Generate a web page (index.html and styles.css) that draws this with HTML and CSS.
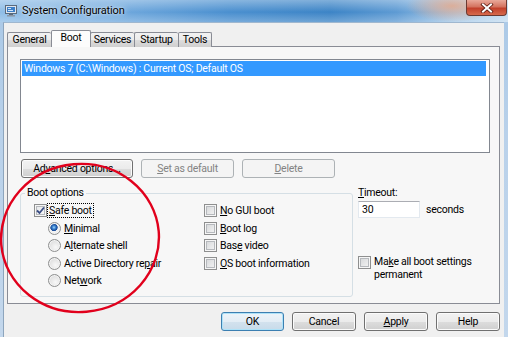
FILE: index.html
```html
<!DOCTYPE html>
<html lang="en">
<head>
    <meta charset="UTF-8">
    <title>System Configuration</title>
    <link rel="stylesheet" href="styles.css">
</head>
<body>
    <div class="window">
        <div class="titlebar">
            <svg class="app-icon" width="12" height="12" viewBox="0 0 12 12">
                <rect x="0.5" y="0.5" width="11" height="8" fill="#dfe6ee" stroke="#5a6a7c"/>
                <rect x="2" y="2" width="8" height="5" fill="#3d7fc7"/>
                <rect x="3" y="3" width="3" height="1" fill="#cfe3f6"/>
                <rect x="3" y="5" width="5" height="1" fill="#cfe3f6"/>
                <rect x="4" y="9" width="4" height="1" fill="#5a6a7c"/>
                <rect x="2" y="10" width="8" height="1.5" fill="#8a96a4"/>
            </svg>
            <span class="title">System Configuration</span>
            <div class="close-btn">
                <svg width="14" height="10" viewBox="0 0 14 10">
                    <path d="M3 1.5 L11 8.5 M11 1.5 L3 8.5" stroke="#5a1a10" stroke-width="3.6" stroke-linecap="square"/>
                    <path d="M3 1.5 L11 8.5 M11 1.5 L3 8.5" stroke="#fff" stroke-width="2" stroke-linecap="square"/>
                </svg>
            </div>
        </div>

        <div class="client">
            <div class="tabs">
                <div class="tab tab-general">General</div>
                <div class="tab tab-boot selected">Boot</div>
                <div class="tab tab-services">Services</div>
                <div class="tab tab-startup">Startup</div>
                <div class="tab tab-tools">Tools</div>
            </div>

            <div class="panel">
                <div class="listbox">
                    <div class="list-item selected">Windows 7 (C:\Windows) : Current OS; Default OS</div>
                </div>

                <div class="list-buttons">
                    <button class="btn btn-advanced">Ad<u>v</u>anced options...</button>
                    <button class="btn btn-wide" disabled><u>S</u>et as default</button>
                    <button class="btn btn-wide" disabled><u>D</u>elete</button>
                </div>

                <div class="options">
                    <fieldset class="group">
                        <legend>Boot options</legend>
                        <div class="group-grid">
                            <div class="col">
                                <label class="opt">
                                    <span class="check checked">
                                        <svg width="9" height="9" viewBox="0 0 9 9">
                                            <path d="M1 4.5 L3.5 7 L8 1.5" fill="none" stroke="#3a4d84" stroke-width="1.8"/>
                                        </svg>
                                    </span>
                                    <span class="focus"><u>S</u>afe boot</span>
                                </label>
                                <label class="opt sub"><span class="radio on"></span><u>M</u>inimal</label>
                                <label class="opt sub"><span class="radio"></span>A<u>l</u>ternate shell</label>
                                <label class="opt sub"><span class="radio"></span>Active Directory re<u>p</u>air</label>
                                <label class="opt sub"><span class="radio"></span>Net<u>w</u>ork</label>
                            </div>
                            <div class="col">
                                <label class="opt"><span class="check"></span><span class="txt"><u>N</u>o GUI boot</span></label>
                                <label class="opt"><span class="check"></span><span class="txt"><u>B</u>oot log</span></label>
                                <label class="opt"><span class="check"></span><span class="txt">Bas<u>e</u> video</span></label>
                                <label class="opt"><span class="check"></span><span class="txt"><u>O</u>S boot information</span></label>
                            </div>
                        </div>
                    </fieldset>

                    <div class="timeout">
                        <div class="timeout-label"><u>T</u>imeout:</div>
                        <div class="timeout-row">
                            <div class="textbox">30</div>
                            <span class="unit">seconds</span>
                        </div>
                        <label class="permanent">
                            <span class="check"></span>
                            <span class="txt">Ma<u>k</u>e all boot settings<br>permanent</span>
                        </label>
                    </div>
                </div>
            </div>

            <div class="footer">
                <button class="btn btn-default btn-ok">OK</button>
                <button class="btn btn-foot">Cancel</button>
                <button class="btn btn-foot"><u>A</u>pply</button>
                <button class="btn btn-foot">Help</button>
            </div>
        </div>

        <svg class="annotation" width="508" height="337" viewBox="0 0 508 337">
            <ellipse cx="80" cy="238" rx="79" ry="74" fill="none" stroke="#e1001c" stroke-width="2.4" transform="rotate(-5 80 238)"/>
        </svg>
    </div>
</body>
</html>
```

FILE: styles.css
```css
body {
    margin: 0;
    font-family: Roboto, "Noto Sans", sans-serif;
    font-size: 10.5px;
    letter-spacing: -0.25px;
    color: #000;
}

.window {
    position: relative;
    width: 508px;
    height: 337px;
    overflow: hidden;
    display: flex;
    flex-direction: column;
    background: linear-gradient(to bottom, #a9c8e6, #b9d1ea 40%, #c3d7ec);
}

.titlebar {
    height: 22px;
    flex-shrink: 0;
    display: flex;
    align-items: flex-start;
    background:
        radial-gradient(ellipse 46px 16px at 452px 6px, rgba(226, 168, 140, 0.85), rgba(226, 168, 140, 0)),
        linear-gradient(to bottom, rgba(255, 255, 255, 0.35), rgba(255, 255, 255, 0) 55%, rgba(255, 255, 255, 0.25)),
        linear-gradient(to right, #8fbde6 0%, #72aade 22%, #4a8fcf 45%, #3c84c6 65%, #5d9ad3 78%, #a6cae9 90%, #c4dcf0 100%);
}

.app-icon {
    margin: 5px 0 0 5px;
}

.title {
    margin: 3px 0 0 5px;
    font-size: 11px;
    line-height: 16px;
    letter-spacing: -0.15px;
    text-shadow: 0 0 6px rgba(255, 255, 255, 0.9), 0 0 2px rgba(255, 255, 255, 0.7);
}

.close-btn {
    margin-left: auto;
    margin-right: 1px;
    width: 41px;
    height: 16px;
    box-sizing: border-box;
    border: 1px solid #6b3a32;
    border-top: none;
    border-radius: 0 0 4px 4px;
    background: linear-gradient(to bottom, #e9a99a 0%, #d4735f 45%, #c2402b 55%, #d66a4d 100%);
    display: flex;
    align-items: center;
    justify-content: center;
}

.client {
    flex: 1;
    margin: 0 4px 0 3px;
    padding: 7px 4px 0 3px;
    background: #f0f0f0;
    border-top: 1px solid #9fb7cf;
    border-left: 1px solid #8da5bd;
}

.tabs {
    height: 17px;
    display: flex;
    align-items: flex-end;
    margin-bottom: -1px;
}

.tab {
    height: 15px;
    box-sizing: border-box;
    border: 1px solid #898c95;
    border-bottom: none;
    border-right: none;
    background: linear-gradient(to bottom, #f2f2f2, #ebebeb 50%, #dddddd 51%, #cfcfcf);
    text-align: center;
    line-height: 14px;
    border-radius: 2px 2px 0 0;
}

.tab-general { width: 44px; }
.tab-boot { width: 40px; }
.tab-services { width: 44px; }
.tab-startup { width: 44px; }
.tab-tools { width: 34px; border-right: 1px solid #898c95; }

.tab.selected {
    position: relative;
    z-index: 1;
    height: 17px;
    line-height: 13px;
    background: #fcfcfc;
    border-right: 1px solid #898c95;
    margin-right: -1px;
}

.panel {
    height: 258px;
    box-sizing: border-box;
    border: 1px solid #898c95;
    background: #f7f7f7;
    padding: 12px 9px 0 12px;
}

.listbox {
    width: 470px;
    height: 94px;
    box-sizing: border-box;
    border: 1px solid #828790;
    background: #fff;
    padding: 1px 3px 0 1px;
}

.list-item {
    height: 15px;
    line-height: 15px;
    padding-left: 2px;
}

.list-item.selected {
    background: #3399ff;
    color: #fff;
}

.list-buttons {
    margin-top: 6px;
    display: flex;
    gap: 8px;
    padding-left: 1px;
}

.btn {
    height: 19px;
    padding: 0;
    font-family: inherit;
    font-size: inherit;
    letter-spacing: inherit;
    line-height: 17px;
    color: #000;
    border: 1px solid #707070;
    border-radius: 3px;
    background: linear-gradient(to bottom, #f2f2f2, #ebebeb 50%, #dddddd 51%, #cfcfcf);
    box-shadow: inset 0 0 0 1px #fbfbfb;
}

.btn:disabled {
    color: #838383;
    border-color: #adb2b5;
    background: #f4f4f4;
    box-shadow: none;
}

.btn-advanced { width: 112px; }
.btn-wide { width: 93px; }

.options {
    margin-top: 8px;
    display: flex;
    gap: 5px;
}

.group {
    width: 333px;
    box-sizing: border-box;
    margin: 0;
    min-width: 0;
    padding: 2px 0 6px 13px;
    border: 1px solid #d5dfe5;
    border-radius: 3px;
}

.group legend {
    padding: 0 2px;
    margin-left: -9px;
    line-height: 14px;
}

.group-grid {
    display: grid;
    grid-template-columns: 170px 1fr;
}

.col {
    display: grid;
    grid-auto-rows: 17.5px;
}

.opt {
    display: flex;
    align-items: center;
}

.opt.sub {
    padding-left: 14px;
}

.check {
    width: 13px;
    height: 13px;
    flex-shrink: 0;
    box-sizing: border-box;
    border: 1px solid #8e8f8f;
    background: linear-gradient(135deg, #d2d4d6, #f7f7f7);
    box-shadow: inset 0 0 0 1px #f6f6f6, inset 0 0 0 2px #b6b9bd;
    display: flex;
    align-items: center;
    justify-content: center;
}

.check.checked {
    background: linear-gradient(135deg, #e4e6e8, #fafafa);
}

.opt .txt {
    margin-left: 3px;
}

.focus {
    margin-left: 1px;
    padding: 0 1px;
    line-height: 13px;
    outline: 1px dotted #000;
}

.radio {
    width: 13px;
    height: 13px;
    box-sizing: border-box;
    flex-shrink: 0;
    margin-right: 3px;
    border: 1px solid #8e8f8f;
    border-radius: 50%;
    background: radial-gradient(circle at 60% 65%, #f8f8f8, #d4d4d4);
    box-shadow: inset 0 0 0 1px #f4f4f4;
}

.radio.on {
    background: radial-gradient(circle at 45% 40%, #a9d6f6 0, #3f8ad6 1.5px, #1c4f9c 3px, #1c4f9c 3.4px, #f2f2f2 4px, #e6e6e6 100%);
}

.timeout {
    width: 132px;
    display: flex;
    flex-direction: column;
    align-items: flex-start;
}

.timeout-label {
    line-height: 14px;
}

.timeout-row {
    margin-top: 1px;
    display: flex;
    align-items: center;
}

.textbox {
    width: 62px;
    height: 17px;
    box-sizing: border-box;
    border: 1px solid #e3e9ef;
    border-top-color: #abadb3;
    background: #fff;
    line-height: 15px;
    padding-left: 3px;
}

.unit {
    margin-left: 6px;
}

.permanent {
    margin-top: 37px;
    display: flex;
    align-items: flex-start;
    line-height: 13px;
    white-space: nowrap;
}

.permanent .check {
    margin-top: 1px;
}

.permanent .txt {
    margin-left: 3px;
}

.footer {
    margin-top: 8px;
    display: flex;
    justify-content: flex-end;
    gap: 8px;
}

.btn-ok { width: 63px; }
.btn-foot { width: 64px; }

.btn-default {
    border-color: #3c7fb1;
    background: linear-gradient(to bottom, #edf4f9, #e3edf5 50%, #d3e2ee 51%, #c8dbea);
    box-shadow: inset 0 0 0 1px #aee2f8;
}

.annotation {
    position: absolute;
    left: 0;
    top: 0;
    pointer-events: none;
}
```
